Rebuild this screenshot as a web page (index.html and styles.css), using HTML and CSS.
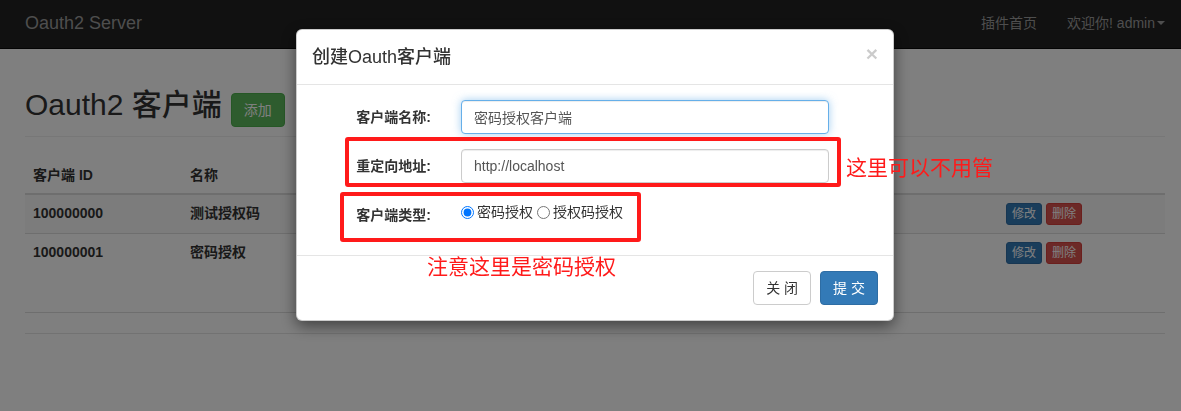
FILE: index.html
```html
<!DOCTYPE html>
<html lang="zh-CN">
<head>
<meta charset="utf-8">
<title>Oauth2 Server</title>
<link rel="stylesheet" href="styles.css">
</head>
<body>
<nav class="navbar">
  <a class="brand" href="#">Oauth2 Server</a>
  <ul class="nav-right">
    <li><a href="#">插件首页</a></li>
    <li><a href="#">欢迎你! admin<span class="caret"></span></a></li>
  </ul>
</nav>

<main class="container">
  <div class="page-header">
    <h1>Oauth2 客户端</h1>
    <button class="btn btn-success">添加</button>
  </div>

  <table class="table">
    <colgroup>
      <col class="c-id"><col class="c-name"><col class="c-op">
    </colgroup>
    <thead>
      <tr><th>客户端 ID</th><th>名称</th><th></th></tr>
    </thead>
    <tbody>
      <tr class="striped">
        <td>100000000</td><td>测试授权码</td>
        <td><div class="ops"><button class="btn btn-xs btn-primary">修改</button><button class="btn btn-xs btn-danger">删除</button></div></td>
      </tr>
      <tr class="last">
        <td>100000001</td><td>密码授权</td>
        <td><div class="ops"><button class="btn btn-xs btn-primary">修改</button><button class="btn btn-xs btn-danger">删除</button></div></td>
      </tr>
    </tbody>
  </table>
  <footer class="page-footer"></footer>
</main>

<div class="backdrop"></div>

<div class="modal">
  <div class="modal-header">
    <h4 class="modal-title">创建Oauth客户端</h4>
    <button class="close" type="button">×</button>
  </div>
  <form class="modal-body">
    <div class="form-group">
      <label class="control-label">客户端名称:</label>
      <input class="form-control focused" type="text" value="密码授权客户端">
    </div>
    <div class="form-group">
      <label class="control-label">重定向地址:</label>
      <input class="form-control" type="text" value="http://localhost">
    </div>
    <div class="form-group">
      <label class="control-label">客户端类型:</label>
      <div class="radios">
        <label class="radio-opt"><input type="radio" name="type" checked>密码授权</label>
        <label class="radio-opt"><input type="radio" name="type">授权码授权</label>
      </div>
    </div>
  </form>
  <div class="modal-footer">
    <button class="btn btn-default" type="button">关 闭</button>
    <button class="btn btn-primary" type="button">提 交</button>
  </div>
</div>

<div class="mark mark-uri"></div>
<div class="mark mark-type"></div>
<div class="note note-uri">这里可以不用管</div>
<div class="note note-type">注意这里是密码授权</div>
</body>
</html>
```

FILE: styles.css
```css
* { box-sizing: border-box; }

body {
  margin: 0;
  font-family: "Liberation Sans", "Noto Sans CJK SC", sans-serif;
  font-size: 14px;
  line-height: 20px;
  color: #333;
  background: #fff;
  overflow: hidden;
}

a { text-decoration: none; color: inherit; }

/* navbar */
.navbar {
  height: 49px;
  background: #222;
  border-bottom: 1px solid #080808;
  display: flex;
  align-items: center;
  justify-content: space-between;
  padding: 0 16px 2px 25px;
}
.brand {
  font-size: 18px;
  line-height: 20px;
  color: #9d9d9d;
}
.nav-right {
  display: flex;
  gap: 30px;
  list-style: none;
  margin: 0;
  padding: 0;
  color: #9d9d9d;
}
.nav-right a { display: flex; align-items: center; }
.caret {
  display: inline-block;
  width: 0;
  height: 0;
  margin-left: 2px;
  border-top: 4px solid #9d9d9d;
  border-left: 4px solid transparent;
  border-right: 4px solid transparent;
}

/* page */
.container {
  padding: 0 16px 0 25px;
}
.page-header {
  display: flex;
  align-items: baseline;
  gap: 9px;
  margin-top: 39px;
  padding-bottom: 9px;
  border-bottom: 1px solid #eee;
  margin-bottom: 20px;
}
.page-header h1 {
  margin: 0;
  font-size: 30px;
  font-weight: 500;
  line-height: 33px;
}

.btn {
  display: inline-block;
  font-family: inherit;
  font-size: 14px;
  line-height: 20px;
  padding: 6px 12px;
  border: 1px solid transparent;
  border-radius: 4px;
  cursor: pointer;
  white-space: nowrap;
}
.btn-success { background: #5cb85c; border-color: #4cae4c; color: #fff; }
.btn-primary { background: #337ab7; border-color: #2e6da4; color: #fff; }
.btn-danger  { background: #d9534f; border-color: #d43f3a; color: #fff; }
.btn-default { background: #fff; border-color: #ccc; color: #333; }
.btn-xs {
  padding: 1px 5px;
  font-size: 12px;
  line-height: 18px;
  border-radius: 3px;
}

/* table */
.table {
  width: 100%;
  border-collapse: separate;
  border-spacing: 0;
  table-layout: fixed;
  margin-bottom: 20px;
}
.c-id { width: 157px; }
.c-name { width: 816px; }
.c-op { width: 167px; }
.table th,
.table td {
  padding: 8px;
  text-align: left;
  vertical-align: top;
  font-weight: bold;
  line-height: 20px;
  white-space: nowrap;
  overflow: hidden;
}
.table thead th { border-bottom: 2px solid #ddd; }
.table tbody td { border-top: 1px solid #ddd; }
.table tbody tr:first-child td { border-top: 0; }
.table tr.striped td { background: #f9f9f9; }
.table tr.last td { border-bottom: 1px solid #ddd; padding-bottom: 48px; }
.ops { display: flex; gap: 4px; }
.page-footer { border-top: 1px solid #e5e5e5; height: 60px; }

/* backdrop + modal */
.backdrop {
  position: fixed;
  inset: 0;
  background: rgba(0, 0, 0, 0.5);
}
.modal {
  position: fixed;
  top: 29px;
  left: 296px;
  width: 598px;
  background: #fff;
  border: 1px solid rgba(0, 0, 0, 0.2);
  border-radius: 6px;
  box-shadow: 0 5px 15px rgba(0, 0, 0, 0.5);
}
.modal-header {
  display: flex;
  justify-content: space-between;
  align-items: flex-start;
  padding: 15px;
  border-bottom: 1px solid #e5e5e5;
}
.modal-title {
  margin: 0;
  font-size: 18px;
  font-weight: 500;
  line-height: 24px;
}
.close {
  margin-top: -2px;
  padding: 0;
  border: 0;
  background: none;
  font-family: "Liberation Sans", sans-serif;
  font-size: 21px;
  font-weight: bold;
  line-height: 1;
  color: #000;
  opacity: 0.2;
  text-shadow: 0 1px 0 #fff;
  cursor: pointer;
}
.modal-body {
  margin: 0;
  padding: 15px;
}
.form-group {
  display: grid;
  grid-template-columns: 119px 368px;
  column-gap: 30px;
  margin-bottom: 15px;
}
.control-label {
  text-align: right;
  padding-top: 7px;
  font-weight: bold;
  white-space: nowrap;
}
.form-control {
  display: block;
  width: 100%;
  height: 34px;
  padding: 6px 12px;
  font-family: inherit;
  font-size: 14px;
  line-height: 20px;
  color: #555;
  background: #fff;
  border: 1px solid #ccc;
  border-radius: 4px;
  box-shadow: inset 0 1px 1px rgba(0, 0, 0, 0.075);
  outline: none;
}
.form-control.focused {
  border-color: #66afe9;
  box-shadow: inset 0 1px 1px rgba(0, 0, 0, 0.075), 0 0 8px rgba(102, 175, 233, 0.6);
}
.radios {
  display: flex;
  gap: 4px;
  padding-top: 1px;
}
.radio-opt {
  display: flex;
  align-items: center;
  gap: 3px;
  line-height: 20px;
}
.radio-opt input {
  margin: 0;
  width: 13px;
  height: 13px;
}
.modal-footer {
  display: flex;
  justify-content: flex-end;
  gap: 9px;
  padding: 15px;
  border-top: 1px solid #e5e5e5;
}

/* red annotations drawn over the screenshot */
.mark {
  position: absolute;
  border: 4px solid #ff1a1a;
  border-radius: 3px;
}
.mark-uri { left: 345px; top: 137px; width: 496px; height: 50px; }
.mark-type { left: 340px; top: 192px; width: 301px; height: 50px; }
.note {
  position: absolute;
  color: #ff1a1a;
  font-family: "Noto Sans CJK SC", sans-serif;
  font-size: 21px;
  line-height: 24px;
  white-space: nowrap;
}
.note-uri { left: 846px; top: 154px; }
.note-type { left: 427px; top: 253px; }
```
